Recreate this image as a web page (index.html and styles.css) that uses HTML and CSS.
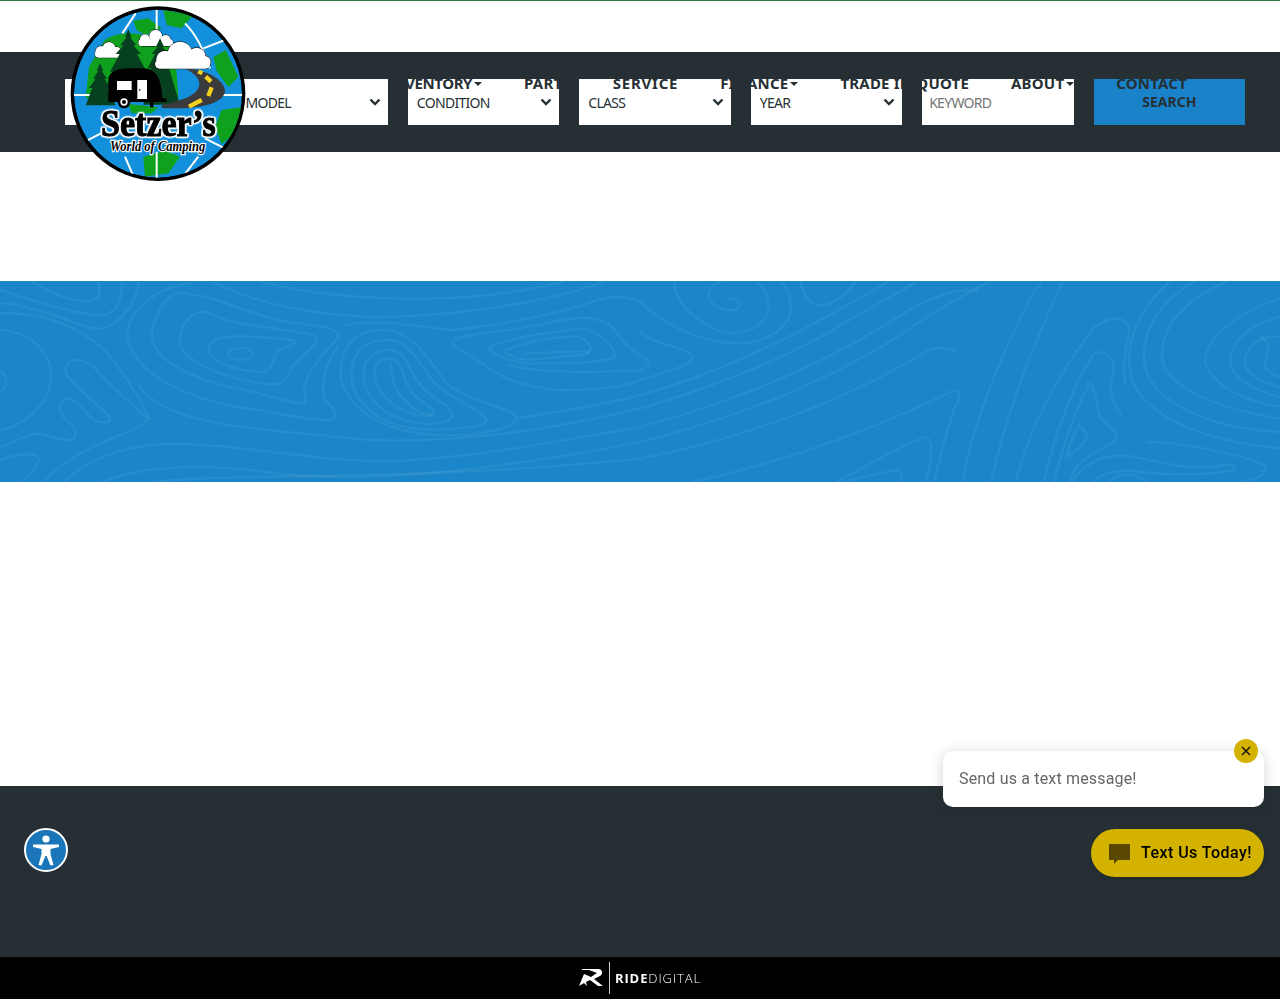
FILE: index.html
```html
<!DOCTYPE html>
<html lang="en">
<head>
    <meta charset="UTF-8">
    <meta name="viewport" content="width=device-width, initial-scale=1.0">
    <title>Setzer's World of Camping</title>
    <link rel="stylesheet" href="styles.css">
</head>
<body>
    <header class="site-header">
        <div class="top-strip"></div>

        <!-- Search bar -->
        <form class="search-bar">
            <select class="search-field"><option>MAKE</option></select>
            <select class="search-field"><option>MODEL</option></select>
            <select class="search-field"><option>CONDITION</option></select>
            <select class="search-field"><option>CLASS</option></select>
            <select class="search-field"><option>YEAR</option></select>
            <input type="text" class="search-field" placeholder="KEYWORD">
            <button type="button" class="search-submit">SEARCH</button>
        </form>

        <!-- Main nav sits over the search bar -->
        <nav class="main-nav">
            <a href="#" class="nav-link nav-tight has-caret">INVENTORY</a>
            <a href="#" class="nav-link">PARTS</a>
            <a href="#" class="nav-link nav-wide">SERVICE</a>
            <a href="#" class="nav-link has-caret">FINANCE</a>
            <a href="#" class="nav-link">TRADE IN QUOTE</a>
            <a href="#" class="nav-link has-caret">ABOUT</a>
            <a href="#" class="nav-link">CONTACT</a>
        </nav>

        <!-- Logo -->
        <a href="#" class="logo">
            <svg viewBox="0 0 555 555" width="185" height="185">
                <defs>
                    <clipPath id="globeClip"><circle cx="279" cy="281" r="252"/></clipPath>
                    <g id="cloudsBack">
                        <circle cx="108" cy="155" r="17"/>
                        <circle cx="132" cy="145" r="19"/>
                        <circle cx="155" cy="155" r="14"/>
                        <rect x="90" y="153" width="78" height="20" rx="10"/>
                        <circle cx="240" cy="118" r="15"/>
                        <circle cx="272" cy="108" r="19"/>
                        <circle cx="302" cy="120" r="15"/>
                        <rect x="220" y="118" width="104" height="20" rx="10"/>
                    </g>
                    <g id="cloudFront">
                        <circle cx="300" cy="178" r="26"/>
                        <circle cx="345" cy="162" r="37"/>
                        <circle cx="395" cy="170" r="27"/>
                        <circle cx="420" cy="185" r="17"/>
                        <rect x="270" y="178" width="166" height="28" rx="14"/>
                    </g>
                </defs>
                <circle cx="279" cy="281" r="262" fill="#000"/>
                <g clip-path="url(#globeClip)">
                    <circle cx="279" cy="281" r="252" fill="#1290dc"/>
                    <g fill="#0fa01e">
                        <path d="M205,62 L250,55 L290,85 L240,105 L215,90Z"/>
                        <path d="M295,30 L385,45 L350,85 L305,75Z"/>
                        <path d="M118,122 C170,85 250,95 330,150 L340,290 L62,295 L72,200Z"/>
                        <path d="M445,172 L482,150 L520,230 L490,262 L455,212Z"/>
                        <path d="M470,330 L530,322 L510,400 L470,432 L450,380Z"/>
                        <path d="M235,470 L300,452 L345,470 L310,520 L240,530Z"/>
                        <path d="M190,312 L280,322 L260,340 L200,340Z"/>
                    </g>
                    <g fill="none" stroke="#fff" stroke-width="6">
                        <path d="M275,20 V100"/>
                        <path d="M275,455 V535"/>
                        <path d="M25,285 H80"/>
                        <path d="M470,285 H535"/>
                        <path d="M360,70 C400,110 420,160 435,205"/>
                        <path d="M212,40 L172,100"/>
                        <path d="M415,145 L480,120"/>
                        <path d="M180,470 L208,535"/>
                        <path d="M400,470 L350,535"/>
                        <path d="M420,415 L485,448"/>
                        <path d="M60,425 L112,398"/>
                    </g>
                    <use href="#cloudsBack" fill="#000" stroke="#000" stroke-width="3"/>
                    <use href="#cloudsBack" fill="#fff"/>
                    <g fill="#07401f">
                        <polygon points="190,88 200,112 195,112 214,136 205,136 228,162 216,162 245,215 135,215 164,162 152,162 175,136 166,136 185,112 180,112"/>
                        <polygon points="285,115 296,138 290,138 310,162 300,162 325,205 312,205 345,314 235,314 258,205 248,205 270,162 260,162 280,138 274,138"/>
                        <polygon points="105,190 115,212 110,212 126,236 118,236 138,264 128,264 152,316 62,316 82,264 72,264 92,236 84,236 100,212 95,212"/>
                    </g>
                    <use href="#cloudFront" fill="#000" stroke="#000" stroke-width="3"/>
                    <use href="#cloudFront" fill="#fff"/>
                    <path d="M360,207 C420,205 482,240 480,275 C472,318 380,328 290,324 L290,316 C330,305 385,295 400,265 C410,245 395,220 360,207Z" fill="#3b3b3d"/>
                    <g fill="none" stroke="#f6d21e" stroke-width="13">
                        <path d="M400,214 L412,220"/>
                        <path d="M422,230 L438,245"/>
                        <path d="M440,262 L430,288"/>
                        <path d="M410,300 L372,320"/>
                    </g>
                    <path d="M130,296 L130,240 C130,215 160,205 190,205 L235,205 C275,205 290,240 292,294 L305,296 L305,306 L130,306Z" fill="#000"/>
                    <rect x="156" y="243" width="44" height="27" fill="#fff"/>
                    <rect x="217" y="240" width="29" height="57" fill="#fff"/>
                    <circle cx="224" cy="270" r="2.5" fill="#000"/>
                    <circle cx="177" cy="306" r="19" fill="#000"/>
                    <circle cx="177" cy="306" r="11" fill="#fff"/>
                    <circle cx="177" cy="306" r="6" fill="#000"/>
                    <rect x="255" y="300" width="10" height="22" fill="#000"/>
                </g>
                <text x="280" y="408" class="logo-name" textLength="344" lengthAdjust="spacingAndGlyphs">Setzer’s</text>
                <text x="278" y="452" class="logo-tag" textLength="286" lengthAdjust="spacingAndGlyphs">World of Camping</text>
            </svg>
        </a>
    </header>

    <!-- Topographic banner -->
    <section class="hero">
        <svg class="topo" viewBox="0 18 3136 602" preserveAspectRatio="none">
            <g fill="none" stroke="#fff" stroke-opacity="0.055" stroke-width="2.5">
                <g>
                    <path vector-effect="non-scaling-stroke" d="M80,20 C110,40 150,75 210,78 C245,78 250,50 240,20"/>
                    <path vector-effect="non-scaling-stroke" d="M0,45 C60,70 160,110 240,122 C290,120 300,70 298,20"/>
                    <path vector-effect="non-scaling-stroke" d="M340,20 C335,80 300,140 255,160 C220,165 180,140 130,120 C80,100 40,85 0,85"/>
                    <path vector-effect="non-scaling-stroke" d="M0,115 C100,110 190,150 260,230 C300,290 340,360 365,430 C340,470 250,490 190,540 C150,570 120,600 110,620"/>
                    <path vector-effect="non-scaling-stroke" d="M0,165 C80,170 130,240 125,310 C120,390 60,450 0,465"/>
                    <path vector-effect="non-scaling-stroke" d="M0,285 C20,300 20,340 0,350"/>
                    <path vector-effect="non-scaling-stroke" d="M195,255 C165,250 150,285 170,310 C200,350 240,390 265,420 C280,440 260,445 240,440 C215,430 195,380 170,370 C145,370 140,400 155,425 C175,445 195,470 180,490 C160,505 120,475 90,475 C60,480 30,505 0,515"/>
                    <path vector-effect="non-scaling-stroke" d="M195,255 C225,260 240,290 265,320 C290,350 330,400 365,430"/>
                    <path vector-effect="non-scaling-stroke" d="M0,555 C30,540 80,525 95,550 C95,575 70,600 55,620"/>
                    <ellipse vector-effect="non-scaling-stroke" cx="590" cy="236" rx="30" ry="18"/>
                    <path vector-effect="non-scaling-stroke" d="M560,185 C520,190 505,210 512,235 C530,270 600,290 640,290 C670,285 670,250 680,225 C700,215 730,210 720,195 C680,190 610,180 560,185Z"/>
                    <path vector-effect="non-scaling-stroke" d="M490,110 C460,120 440,160 440,200 C445,250 520,300 640,325 C690,335 700,320 715,280 C730,240 780,220 775,185 C760,170 650,160 570,140 C530,130 510,105 490,110Z"/>
                    <path vector-effect="non-scaling-stroke" d="M430,55 C400,70 370,140 372,190 C380,260 480,320 620,350 C680,370 720,385 745,385 C755,375 745,360 745,340 C750,290 790,240 830,185 C830,155 770,150 700,140 C590,110 520,60 470,60 C455,55 445,50 430,55Z"/>
                    <path vector-effect="non-scaling-stroke" d="M475,20 C440,30 390,40 350,90 C310,130 300,190 330,240 C370,320 500,390 640,405 C720,425 780,435 810,435 C830,420 820,400 800,380 C780,330 800,260 830,210"/>
                    <path vector-effect="non-scaling-stroke" d="M340,330 C390,420 520,450 700,470 C800,480 900,500 1000,495"/>
                    <path vector-effect="non-scaling-stroke" d="M955,225 C900,225 885,270 892,320 C905,390 970,450 1060,445 C1120,440 1120,410 1080,380 C1040,350 1020,320 1000,270 C990,245 975,225 955,225Z"/>
                    <path vector-effect="non-scaling-stroke" d="M950,195 C880,195 855,250 862,320 C880,410 960,470 1080,462 C1150,460 1200,450 1190,430 C1170,400 1110,370 1070,330 C1030,280 1010,195 950,195Z"/>
                    <path vector-effect="non-scaling-stroke" d="M940,165 C860,165 830,230 835,310 C860,420 960,480 1100,480 C1200,480 1270,450 1265,425 C1240,390 1150,380 1100,330 C1060,280 1020,165 940,165Z"/>
                    <path vector-effect="non-scaling-stroke" d="M935,255 C915,260 915,300 925,335 C950,390 1010,430 1060,420 C1075,410 1050,395 1020,365 C990,335 990,280 975,262 C960,250 945,250 935,255Z"/>
                    <path vector-effect="non-scaling-stroke" d="M958,265 C958,320 975,370 1020,405 C1040,420 1060,420 1060,412"/>
                    <path vector-effect="non-scaling-stroke" d="M1110,195 C1130,175 1250,170 1340,145 C1420,120 1480,120 1510,170 C1530,210 1550,230 1568,240"/>
                    <path vector-effect="non-scaling-stroke" d="M1240,225 C1300,195 1380,180 1420,185 C1445,200 1460,230 1430,240 C1380,240 1300,260 1270,250 C1250,240 1235,235 1240,225Z"/>
                    <path vector-effect="non-scaling-stroke" d="M1200,215 C1240,190 1350,170 1430,160 C1480,180 1510,220 1505,245 C1470,265 1370,265 1290,265 C1240,255 1190,230 1200,215Z"/>
                    <path vector-effect="non-scaling-stroke" d="M1280,235 C1330,235 1400,225 1445,230"/>
                    <path vector-effect="non-scaling-stroke" d="M1110,195 C1105,215 1130,225 1170,255 C1210,290 1250,335 1380,345 C1480,345 1540,330 1568,315"/>
                    <path vector-effect="non-scaling-stroke" d="M1250,270 C1290,290 1450,295 1568,285"/>
                    <path vector-effect="non-scaling-stroke" d="M520,20 C600,70 720,115 900,125 C1100,130 1350,80 1480,20"/>
                    <path vector-effect="non-scaling-stroke" d="M640,20 C760,60 900,75 1080,70 C1200,65 1300,45 1380,20"/>
                    <path vector-effect="non-scaling-stroke" d="M1568,80 C1530,60 1490,60 1430,90 C1320,130 1180,155 1110,165 C1000,155 960,130 840,150"/>
                    <path vector-effect="non-scaling-stroke" d="M1000,495 C1200,490 1400,450 1568,400"/>
                    <path vector-effect="non-scaling-stroke" d="M1270,430 C1350,410 1480,390 1568,360"/>
                    <path vector-effect="non-scaling-stroke" d="M155,620 C220,550 300,510 420,505 C600,505 800,570 1000,555 C1200,540 1400,490 1568,455"/>
                    <path vector-effect="non-scaling-stroke" d="M250,620 C350,570 500,565 650,590 C850,625 1150,600 1568,500"/>
                    <path vector-effect="non-scaling-stroke" d="M370,620 C600,590 1000,620 1568,550"/>
                </g>
                <g transform="translate(1568,0)">
                    <path vector-effect="non-scaling-stroke" d="M215,70 C235,65 250,85 240,100 C220,115 180,100 170,70 C165,40 185,18 205,18"/>
                    <path vector-effect="non-scaling-stroke" d="M85,18 C80,70 120,130 200,170 C260,185 310,150 315,100 C315,60 300,30 285,18"/>
                    <path vector-effect="non-scaling-stroke" d="M0,80 C40,130 130,200 230,205 C320,205 370,150 370,95 C370,60 355,35 345,18"/>
                    <path vector-effect="non-scaling-stroke" d="M395,18 C395,60 420,95 450,90 C480,85 510,50 530,18"/>
                    <path vector-effect="non-scaling-stroke" d="M0,170 C40,215 110,210 130,245 C125,275 60,290 0,315"/>
                    <path vector-effect="non-scaling-stroke" d="M0,240 C15,250 25,260 20,270 C10,280 0,285 0,285"/>
                    <path vector-effect="non-scaling-stroke" d="M0,360 C150,310 300,230 450,130 C520,80 570,50 610,18"/>
                    <path vector-effect="non-scaling-stroke" d="M0,400 C170,340 350,260 520,130 C590,80 640,50 680,18"/>
                    <path vector-effect="non-scaling-stroke" d="M0,455 C200,390 400,300 600,150 C700,70 770,35 830,50"/>
                    <path vector-effect="non-scaling-stroke" d="M0,500 C230,430 450,330 650,170 C720,110 790,60 860,18"/>
                    <path vector-effect="non-scaling-stroke" d="M0,550 C250,490 500,380 700,230 C730,210 760,220 775,230"/>
                    <path vector-effect="non-scaling-stroke" d="M130,620 C350,560 560,470 760,350 C790,340 785,370 770,400 C750,470 735,550 720,620"/>
                    <path vector-effect="non-scaling-stroke" d="M480,620 C560,570 640,510 700,485 C720,490 715,560 700,620"/>
                    <path vector-effect="non-scaling-stroke" d="M500,620 C560,600 600,590 630,585 C645,590 640,610 640,620"/>
                    <path vector-effect="non-scaling-stroke" d="M790,620 C810,480 860,300 960,60 C970,45 975,30 985,18"/>
                    <path vector-effect="non-scaling-stroke" d="M860,620 C890,460 930,300 1035,18"/>
                    <path vector-effect="non-scaling-stroke" d="M920,620 C950,480 1000,340 1110,160 C1150,120 1190,120 1200,165 C1190,220 1180,280 1190,330"/>
                    <path vector-effect="non-scaling-stroke" d="M990,620 C1010,500 1060,330 1110,240 C1130,220 1160,240 1160,280 C1150,340 1150,370 1180,420"/>
                    <path vector-effect="non-scaling-stroke" d="M1075,450 C1060,480 1050,520 1045,545 C1070,525 1095,500 1095,480 C1090,465 1080,455 1075,450Z"/>
                    <path vector-effect="non-scaling-stroke" d="M1015,620 C1030,530 1070,400 1100,325 C1120,330 1115,400 1130,430 C1150,460 1175,470 1165,495 C1130,530 1060,550 1055,620"/>
                    <path vector-effect="non-scaling-stroke" d="M1300,18 C1230,90 1190,190 1200,280 C1210,400 1340,490 1568,520"/>
                    <path vector-effect="non-scaling-stroke" d="M1360,18 C1260,90 1230,180 1235,260 C1250,380 1390,460 1568,470"/>
                    <path vector-effect="non-scaling-stroke" d="M1440,18 C1320,80 1270,170 1280,260 C1300,350 1450,410 1568,430"/>
                    <path vector-effect="non-scaling-stroke" d="M1568,70 C1450,120 1385,190 1385,260 C1395,330 1490,380 1568,395"/>
                    <path vector-effect="non-scaling-stroke" d="M1568,125 C1490,150 1445,200 1445,260 C1450,310 1510,350 1568,365"/>
                    <path vector-effect="non-scaling-stroke" d="M1568,185 C1530,180 1490,200 1480,260 C1485,300 1530,325 1568,335"/>
                    <path vector-effect="non-scaling-stroke" d="M1520,185 C1545,195 1540,230 1530,270 C1535,290 1550,300 1568,305"/>
                    <path vector-effect="non-scaling-stroke" d="M1060,620 C1080,570 1130,540 1180,540 C1260,550 1300,580 1400,575 C1450,560 1470,570 1450,585 C1400,600 1300,600 1230,590 C1180,580 1130,590 1110,620"/>
                    <path vector-effect="non-scaling-stroke" d="M1150,620 C1170,590 1210,590 1240,620"/>
                    <path vector-effect="non-scaling-stroke" d="M1240,500 C1330,500 1480,540 1530,570 C1540,600 1500,615 1470,620"/>
                </g>
            </g>
        </svg>
    </section>

    <main class="page-body"></main>

    <footer>
        <div class="footer-main"></div>
        <div class="footer-credit">
            <svg class="ride-mark" viewBox="0 0 24 18" width="24" height="18">
                <path d="M0,17 L5,5 L12,8 L18,4 L10,1 L2,1 L4,0 L20,0 C24,1 24,5 21,7 L15,10 L24,17 L19,17 L11,11 L7,13 L8,17 L5,14Z" fill="#fff"/>
            </svg>
            <span class="credit-rule"></span>
            <span class="credit-name"><b>RIDE</b>DIGITAL</span>
        </div>
    </footer>

    <!-- Accessibility button -->
    <a href="#" class="access-btn">
        <svg viewBox="0 0 44 44" width="44" height="44">
            <circle cx="22" cy="22" r="21" fill="#1a76b8" stroke="#fff" stroke-width="2"/>
            <circle cx="22" cy="11" r="3.6" fill="#fff"/>
            <path d="M9,16.5 L35,16.5 L35,19 L26.5,21 L26.5,26 L29.5,37 L26.5,37.6 L22.6,28 L21.4,28 L17.5,37.6 L14.5,37 L17.5,26 L17.5,21 L9,19Z" fill="#fff"/>
        </svg>
    </a>

    <!-- Text chat widget -->
    <div class="chat-popup">
        <span class="chat-close">
            <svg viewBox="0 0 24 24" width="24" height="24">
                <path d="M8,8 L16,16 M16,8 L8,16" stroke="#111" stroke-width="1.4" fill="none"/>
            </svg>
        </span>
        Send us a text message!
    </div>
    <a href="#" class="chat-btn">
        <svg viewBox="0 0 22 22" width="22" height="22">
            <path d="M2,2 H21 C21.5,2 22,2.5 22,3 V17 C22,17.5 21.5,18 21,18 H10 L6,22 V18 H2 C1.5,18 1,17.5 1,17 V3 C1,2.5 1.5,2 2,2Z" fill="#5a4700"/>
        </svg>
        <span class="chat-btn-label">Text Us Today!</span>
    </a>
</body>
</html>
```

FILE: styles.css
```css
body {
    font-family: "Noto Sans", Arial, sans-serif;
    margin: 0;
    padding: 0;
    background-color: #ffffff;
    color: #263034;
}

.site-header {
    position: relative;
}

.top-strip {
    height: 51px;
    background-color: #ffffff;
    border-top: 1px solid #2f7a4d;
}

.search-bar {
    display: grid;
    grid-template-columns: repeat(7, 1fr);
    gap: 20px;
    height: 46px;
    padding: 27px 35px 27px 65px;
    background-color: #263034;
}

.search-field {
    width: 100%;
    height: 46px;
    box-sizing: border-box;
    margin: 0;
    padding: 0 8px 0 9px;
    border: none;
    border-radius: 0;
    background-color: #ffffff;
    color: #263034;
    font-family: "Noto Sans", Arial, sans-serif;
    font-size: 14px;
    letter-spacing: -0.7px;
}

select.search-field {
    appearance: none;
    background-image: url("data:image/svg+xml,%3Csvg xmlns='http://www.w3.org/2000/svg' width='12' height='8'%3E%3Cpath d='M1.5 1.5 L6 6 L10.5 1.5' fill='none' stroke='%23263034' stroke-width='2.4'/%3E%3C/svg%3E");
    background-repeat: no-repeat;
    background-position: right 7px center;
}

input.search-field {
    padding: 0 7px;
}

input.search-field::placeholder {
    color: #757575;
}

.search-submit {
    height: 46px;
    padding: 0 0 2px 0;
    border: none;
    background-color: #1a82c8;
    color: #263034;
    font-family: "Noto Sans", Arial, sans-serif;
    font-size: 14px;
    font-weight: 700;
}

.main-nav {
    position: absolute;
    top: 73px;
    right: 93px;
    display: flex;
    gap: 42px;
}

.nav-link {
    color: #263034;
    font-size: 15px;
    font-weight: 700;
    line-height: 20px;
    letter-spacing: 0.2px;
    text-decoration: none;
}

.nav-tight {
    letter-spacing: -0.4px;
}

.nav-wide {
    letter-spacing: 0.75px;
}

.has-caret::after {
    content: "";
    display: inline-block;
    margin-left: 2px;
    vertical-align: 3px;
    border-top: 4px solid #263034;
    border-left: 4.5px solid transparent;
    border-right: 4.5px solid transparent;
}

.logo {
    position: absolute;
    top: 0;
    left: 65px;
    display: block;
    width: 185px;
    height: 185px;
}

.logo-name {
    font-family: "Liberation Serif", serif;
    font-size: 112px;
    font-weight: 700;
    text-anchor: middle;
    fill: #000000;
    stroke: #000000;
    stroke-width: 3px;
    filter: drop-shadow(4px 0 0 #fff) drop-shadow(-4px 0 0 #fff) drop-shadow(0 4px 0 #fff) drop-shadow(0 -4px 0 #fff);
}

.logo-tag {
    font-family: "Liberation Serif", serif;
    font-size: 46px;
    font-style: italic;
    font-weight: 700;
    text-anchor: middle;
    fill: #000000;
    stroke: #ffffff;
    stroke-width: 7px;
    paint-order: stroke;
}

.hero {
    height: 201px;
    margin-top: 129px;
    background-color: #1a86c9;
}

.topo {
    display: block;
    width: 100%;
    height: 100%;
}

.page-body {
    height: 304px;
}

.footer-main {
    height: 171px;
    background-color: #263034;
}

.footer-credit {
    display: flex;
    align-items: center;
    justify-content: center;
    height: 42px;
    background-color: #000000;
}

.ride-mark {
    margin-right: 6px;
}

.credit-rule {
    width: 1px;
    height: 32px;
    margin-right: 5px;
    background-color: #cccccc;
}

.credit-name {
    color: #ffffff;
    font-family: "Open Sans", sans-serif;
    font-size: 13px;
    font-weight: 300;
    letter-spacing: 0.9px;
    opacity: 0.99;
}

.credit-name b {
    color: #ffffff;
    font-weight: 700;
}

.access-btn {
    position: fixed;
    left: 24px;
    top: 828px;
    display: block;
    width: 44px;
    height: 44px;
}

.chat-popup {
    position: fixed;
    right: 16px;
    top: 751px;
    box-sizing: border-box;
    width: 321px;
    height: 56px;
    padding: 0 16px;
    border-radius: 10px;
    background-color: #ffffff;
    box-shadow: 0 2px 14px rgba(0, 0, 0, 0.18);
    color: #666666;
    font-family: Roboto, sans-serif;
    font-size: 16px;
    line-height: 55px;
    letter-spacing: 0.17px;
}

.chat-close {
    position: absolute;
    top: -12px;
    right: 6px;
    width: 24px;
    height: 24px;
    border-radius: 50%;
    background-color: #d4b200;
}

.chat-close svg {
    display: block;
}

.chat-btn {
    position: fixed;
    right: 16px;
    top: 829px;
    display: flex;
    align-items: center;
    gap: 11px;
    box-sizing: border-box;
    width: 173px;
    height: 48px;
    padding-left: 17px;
    border-radius: 24px;
    background-color: #d4b200;
    box-shadow: 0 2px 6px rgba(0, 0, 0, 0.15);
    color: #000000;
    font-family: Roboto, sans-serif;
    font-size: 16px;
    font-weight: 500;
    letter-spacing: 0.45px;
    text-decoration: none;
    white-space: nowrap;
}

.chat-btn-label {
    margin-bottom: 2px;
}
```
